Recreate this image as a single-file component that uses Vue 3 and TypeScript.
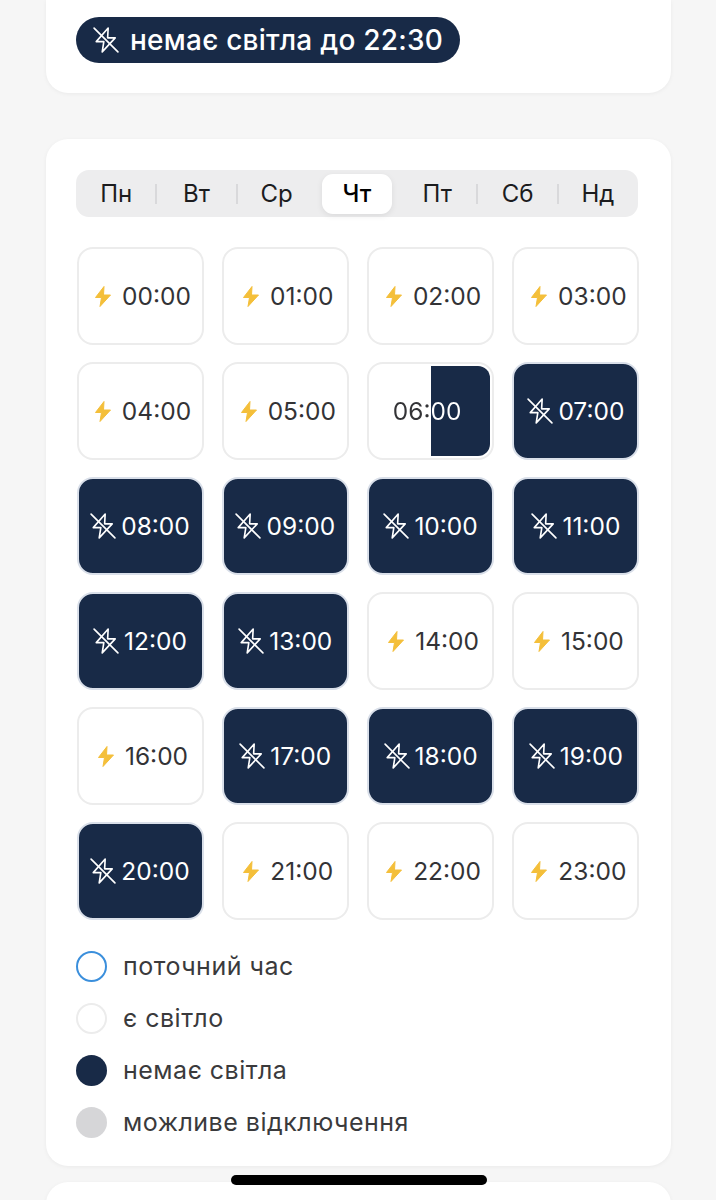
<script setup lang="ts">
type Status = 'on' | 'off' | 'half'

interface Hour {
  time: string
  status: Status
}

const days = ['Пн', 'Вт', 'Ср', 'Чт', 'Пт', 'Сб', 'Нд']
const activeDay = 3

const offHours = [7, 8, 9, 10, 11, 12, 13, 17, 18, 19, 20]

const hours: Hour[] = Array.from({ length: 24 }, (_, h) => ({
  time: `${String(h).padStart(2, '0')}:00`,
  status: h === 6 ? 'half' : offHours.includes(h) ? 'off' : 'on',
}))

const legend = [
  { label: 'поточний час', kind: 'current' },
  { label: 'є світло', kind: 'light' },
  { label: 'немає світла', kind: 'dark' },
  { label: 'можливе відключення', kind: 'maybe' },
]

// a divider is dropped next to the selected tab
const showDivider = (i: number) => i < days.length - 1 && i !== activeDay && i !== activeDay - 1
</script>

<template>
  <div class="page">
    <section class="card top-card">
      <div class="pill">
        <svg class="icon-off" viewBox="0 0 24 24">
          <path d="M14 1 3 13.5H10L8.5 23 20.5 10h-7z" />
          <path d="M1 1l22 22" />
        </svg>
        <span>немає світла до 22:30</span>
      </div>
    </section>

    <section class="card main-card">
      <div class="tabs">
        <div v-for="(day, i) in days" :key="day" class="tab" :class="{ active: i === activeDay, divided: showDivider(i) }">
          <span class="tab-label">{{ day }}</span>
        </div>
      </div>

      <div class="grid">
        <div v-for="hour in hours" :key="hour.time" class="cell" :class="hour.status">
          <div v-if="hour.status === 'half'" class="half-fill"></div>
          <svg v-if="hour.status === 'on'" class="icon-on" viewBox="0 0 18 23">
            <path d="M10 1.5 1.5 12.5h6L6 21.5 16.5 10H9.5z" />
          </svg>
          <svg v-if="hour.status === 'off'" class="icon-off" viewBox="0 0 24 24">
            <path d="M14 1 3 13.5H10L8.5 23 20.5 10h-7z" />
            <path d="M1 1l22 22" />
          </svg>
          <span class="time">{{ hour.time }}</span>
        </div>
      </div>

      <ul class="legend">
        <li v-for="item in legend" :key="item.kind">
          <i class="dot" :class="item.kind"></i>
          {{ item.label }}
        </li>
      </ul>
    </section>

    <section class="card bottom-card"></section>
    <div class="home-bar"></div>
  </div>
</template>

<style scoped>
.page {
  position: relative;
  height: 1200px;
  overflow: hidden;
  padding: 0 45px 0 46px;
  box-sizing: border-box;
  background: #f6f6f6;
  font-family: Inter, "Noto Sans", sans-serif;
  color: #333336;
}

.card {
  background: #fff;
  border-radius: 22px;
  box-shadow: 0 1px 4px rgba(0, 0, 0, 0.05);
}

.top-card {
  height: 93px;
  padding: 17px 30px 0;
  box-sizing: border-box;
  border-radius: 0 0 22px 22px;
}

.pill {
  display: inline-flex;
  align-items: center;
  gap: 11px;
  height: 46px;
  padding: 0 17px;
  box-sizing: border-box;
  border-radius: 23px;
  background: #182a47;
  color: #fff;
  font-size: 28px;
  font-weight: 500;
  letter-spacing: 0.25px;
  white-space: nowrap;
}

.main-card {
  margin-top: 46px;
  height: 1027px;
  padding: 31px 30px 0;
  box-sizing: border-box;
}

.tabs {
  display: flex;
  width: 562px;
  height: 47px;
  align-items: center;
  border-radius: 13px;
  background: #ededee;
}

.tab {
  position: relative;
  flex: 1 1 0;
  min-width: 0;
  font-size: 24px;
  color: #1c1c1e;
}

.tab-label {
  display: block;
  height: 40px;
  line-height: 40px;
  text-align: center;
}

.tab.divided::after {
  content: '';
  position: absolute;
  right: -1px;
  top: 10px;
  height: 20px;
  width: 2px;
  background: #d9d9db;
}

.tab.active .tab-label {
  margin: 0 5px;
  border-radius: 11px;
  background: #fff;
  font-weight: 500;
  color: #000;
  box-shadow: 0 2px 6px rgba(0, 0, 0, 0.08);
}

.grid {
  display: grid;
  grid-template-columns: repeat(4, 127px);
  grid-auto-rows: 98px;
  column-gap: 18.3px;
  row-gap: 17px;
  margin: 30px 0 0 0.5px;
}

.cell {
  position: relative;
  display: flex;
  align-items: center;
  justify-content: center;
  gap: 10px;
  box-sizing: border-box;
  border: 2px solid #ececec;
  border-radius: 16px;
  background: #fff;
  font-size: 24.5px;
}

.cell.on {
  padding-left: 5px;
}

.cell.off {
  gap: 5px;
  background: #182a47;
  border-color: #d9dfe9;
  color: #fff;
}

.half-fill {
  position: absolute;
  top: 2px;
  right: 2px;
  bottom: 2px;
  left: 50%;
  border-radius: 0 12px 12px 0;
  background: #182a47;
}

.cell.half .time {
  position: relative;
  margin-right: 7px;
  background: linear-gradient(90deg, #333336 56%, #fff 56%);
  -webkit-background-clip: text;
  background-clip: text;
  color: transparent;
}

.icon-on {
  width: 18px;
  height: 23px;
  flex: none;
  fill: #f4bf3a;
  stroke: #f4bf3a;
  stroke-width: 1;
  stroke-linejoin: round;
}

.icon-off {
  width: 26px;
  height: 26px;
  flex: none;
  fill: none;
  stroke: #fff;
  stroke-width: 1.5;
  stroke-linejoin: round;
  stroke-linecap: round;
}

.legend {
  list-style: none;
  margin: 20px 0 0;
  padding: 0;
}

.legend li {
  display: flex;
  align-items: center;
  gap: 16px;
  height: 52px;
  font-size: 25px;
  letter-spacing: 0.5px;
  color: #3a3a3c;
}

.dot {
  width: 31px;
  height: 31px;
  box-sizing: border-box;
  border-radius: 50%;
}

.dot.current {
  border: 2px solid #3b8fdc;
}

.dot.light {
  border: 2px solid #ececec;
}

.dot.dark {
  background: #182a47;
}

.dot.maybe {
  background: #d6d6d8;
}

.bottom-card {
  margin-top: 16px;
  height: 60px;
}

.home-bar {
  position: absolute;
  left: 231px;
  bottom: 15px;
  width: 256px;
  height: 10px;
  border-radius: 5px;
  background: #000;
}
</style>

<style>
html,
body {
  margin: 0;
  background: #f6f6f6;
}
</style>
